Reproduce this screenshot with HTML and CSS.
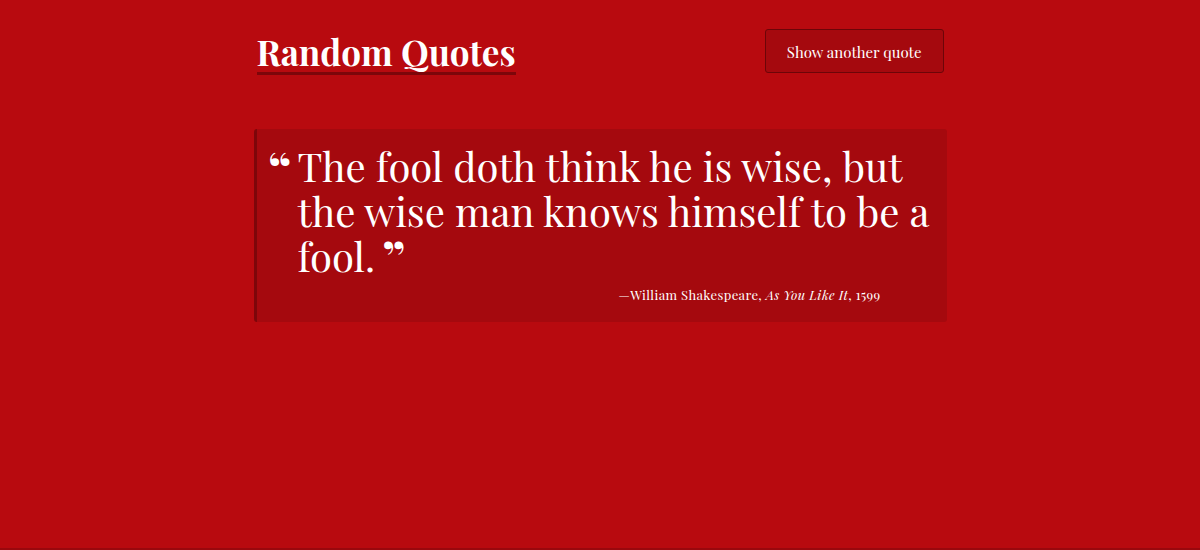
FILE: index.html
```html
<!DOCTYPE html>
<html lang="en">
<head>
<meta charset="utf-8">
<title>Random Quotes</title>
<link rel="stylesheet" href="styles.css">
</head>
<body>
<div class="page">
  <header class="header">
    <h1 class="title">Random Quotes</h1>
    <button class="button" type="button">Show another quote</button>
  </header>
  <main class="card">
    <blockquote class="quote">The fool doth think he is wise, but the wise man knows himself to be a fool.</blockquote>
    <p class="source">—William Shakespeare, <cite>As You Like It</cite>, 1599</p>
  </main>
</div>
</body>
</html>
```
FILE: styles.css
```css
* { box-sizing: border-box; }
body {
  margin: 0;
  min-height: 100vh;
  background: #b80a0f;
  border-bottom: 2px solid #9a080d;
  color: #fff;
  font-family: "Playfair Display", "Liberation Serif", serif;
}
.page {
  max-width: 693px;
  margin: 0 auto;
  padding-top: 29px;
}
.header {
  display: flex;
  justify-content: space-between;
  align-items: flex-start;
  padding: 0 3px;
  margin-bottom: 54px;
}
.title {
  margin: 0;
  padding-top: 3px;
  border-bottom: 3px solid #7d060a;
  font-size: 35px;
  line-height: 40px;
  font-weight: 700;
}
.button {
  padding: 2px 21px 0;
  height: 44px;
  border: 1px solid #6d0508;
  border-radius: 3px;
  background: #a5090e;
  color: #fff;
  font: 15px "Playfair Display", "Liberation Serif", serif;
}
.card {
  padding: 14px 16px 15px 41px;
  border-left: 3px solid #7d060a;
  border-radius: 3px;
  background: #a5090e;
}
.quote {
  position: relative;
  margin: 0;
  font-size: 40px;
  line-height: 45px;
}
.quote::before,
.quote::after {
  font-size: 45px;
  font-weight: 900;
}
.quote::before {
  content: "“";
  position: absolute;
  top: 2px;
  left: -29px;
}
.quote::after {
  content: "”";
  margin-left: 8px;
  line-height: 0;
  vertical-align: -2px;
}
.source {
  margin: 5px 50px 0 0;
  font-size: 13px;
  line-height: 24px;
  letter-spacing: 0.03em;
  text-align: right;
}
```
